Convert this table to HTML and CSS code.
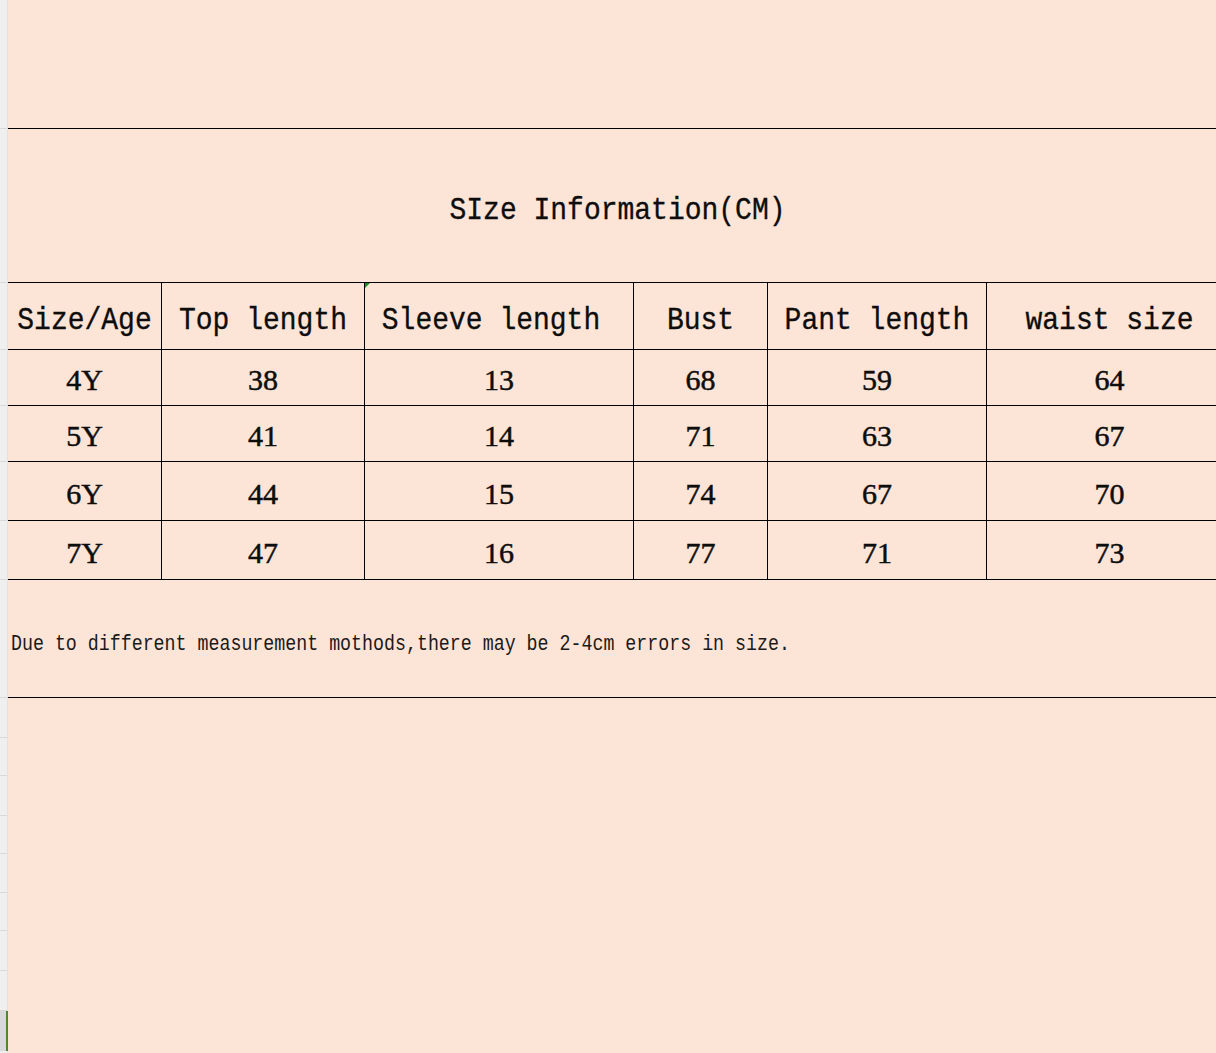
FILE: index.html
```html
<!DOCTYPE html>
<html lang="en">
<head>
<meta charset="utf-8">
<title>Size Information</title>
<link rel="stylesheet" href="styles.css">
</head>
<body>
<div class="sheet">
  <aside class="gutter">
    <div class="g g1"></div>
    <div class="g g2"></div>
    <div class="g g3"></div>
    <div class="g g4"></div>
    <div class="g g4"></div>
    <div class="g g6"></div>
    <div class="g g6"></div>
    <div class="g g8"></div>
    <div class="g g9"></div>
    <div class="g g10"></div>
    <div class="g g9"></div>
    <div class="g g10"></div>
    <div class="g g13"></div>
    <div class="g g10"></div>
    <div class="g g9"></div>
    <div class="g g9"></div>
    <div class="g gsel"></div>
  </aside>
  <main class="content">
    <div class="blank-top"></div>
    <div class="title"><span class="tall">SIze Information(CM)</span></div>
    <div class="grid">
      <div class="row head">
        <div class="cell"><span class="tall">Size/Age</span></div>
        <div class="cell"><span class="tall">Top length</span></div>
        <div class="cell sleeve"><span class="marker"></span><span class="tall">Sleeve length</span></div>
        <div class="cell"><span class="tall">Bust</span></div>
        <div class="cell"><span class="tall">Pant length</span></div>
        <div class="cell"><span class="tall">waist size</span></div>
      </div>
      <div class="row data short">
        <div class="cell">4Y</div><div class="cell">38</div><div class="cell">13</div><div class="cell">68</div><div class="cell">59</div><div class="cell">64</div>
      </div>
      <div class="row data short">
        <div class="cell">5Y</div><div class="cell">41</div><div class="cell">14</div><div class="cell">71</div><div class="cell">63</div><div class="cell">67</div>
      </div>
      <div class="row data tallrow">
        <div class="cell">6Y</div><div class="cell">44</div><div class="cell">15</div><div class="cell">74</div><div class="cell">67</div><div class="cell">70</div>
      </div>
      <div class="row data tallrow">
        <div class="cell">7Y</div><div class="cell">47</div><div class="cell">16</div><div class="cell">77</div><div class="cell">71</div><div class="cell">73</div>
      </div>
    </div>
    <div class="note"><span class="note-text">Due to different measurement mothods,there may be 2-4cm errors in size.</span></div>
  </main>
</div>
</body>
</html>
```

FILE: styles.css
```css
html, body {
  margin: 0;
  padding: 0;
}

body {
  background: #fce4d6;
  color: #0d0d0d;
}

.sheet {
  display: flex;
  height: 1053px;
  overflow: hidden;
}

/* left row-header strip */
.gutter {
  flex: none;
  width: 7px;
  background: #efefef;
  border-right: 1px solid #e2e2e2;
  display: flex;
  flex-direction: column;
}

.g {
  flex: none;
  border-bottom: 1px solid #d9d9d9;
}

.g1 { height: 128px; }
.g2 { height: 153px; }
.g3 { height: 66px; }
.g4 { height: 55px; }
.g6 { height: 58px; }
.g8 { height: 117px; }
.g9 { height: 39px; }
.g10 { height: 37px; }
.g13 { height: 38px; }

.gsel {
  flex: 1;
  border-bottom: none;
  background: #d9d9d9;
  border-right: 2px solid #4b8a2c;
  margin-right: -1px;
  max-height: 40px;
}

/* sheet content */
.content {
  flex: 1;
  display: flex;
  flex-direction: column;
  min-width: 0;
}

.blank-top {
  flex: none;
  height: 128px;
  border-bottom: 1px solid #000;
}

.title {
  flex: none;
  height: 154px;
  border-bottom: 1px solid #000;
  display: flex;
  align-items: center;
  justify-content: center;
  padding-left: 11px;
  padding-top: 9px;
  box-sizing: border-box;
  font-family: "Liberation Mono", monospace;
  font-size: 28px;
  -webkit-text-stroke: 0.3px #0d0d0d;
}

.tall {
  display: inline-block;
  transform: scaleY(1.15);
}

.grid {
  flex: none;
  display: flex;
  flex-direction: column;
}

.row {
  display: grid;
  grid-template-columns: 154px 203px 269px 134px 219px 229px;
  border-bottom: 1px solid #000;
}

.head { height: 66px; }
.short { height: 55px; }
.tallrow { height: 58px; }

.cell {
  border-right: 1px solid #000;
  display: flex;
  align-items: center;
  justify-content: center;
  box-sizing: border-box;
  white-space: nowrap;
}

.cell:last-child {
  border-right: none;
  padding-left: 16px;
}

.head .cell {
  font-family: "Liberation Mono", monospace;
  font-size: 28px;
  padding-top: 9px;
  -webkit-text-stroke: 0.3px #0d0d0d;
}

.head .cell.sleeve {
  position: relative;
  padding-right: 16px;
}

.marker {
  position: absolute;
  left: 0;
  top: 0;
  width: 0;
  height: 0;
  border-top: 5px solid #1f8a1f;
  border-right: 5px solid transparent;
}

.data .cell {
  font-family: "Liberation Serif", serif;
  font-size: 30px;
  padding-top: 5px;
  -webkit-text-stroke: 0.5px #0d0d0d;
}

.note {
  flex: none;
  height: 118px;
  border-bottom: 1px solid #000;
  display: flex;
  align-items: center;
  padding-left: 3px;
  padding-top: 10px;
  box-sizing: border-box;
  font-family: "Liberation Mono", monospace;
  font-size: 18.3px;
  color: #1a1a1a;
}

.note-text {
  display: inline-block;
  transform: scaleY(1.2);
  white-space: nowrap;
}
```
